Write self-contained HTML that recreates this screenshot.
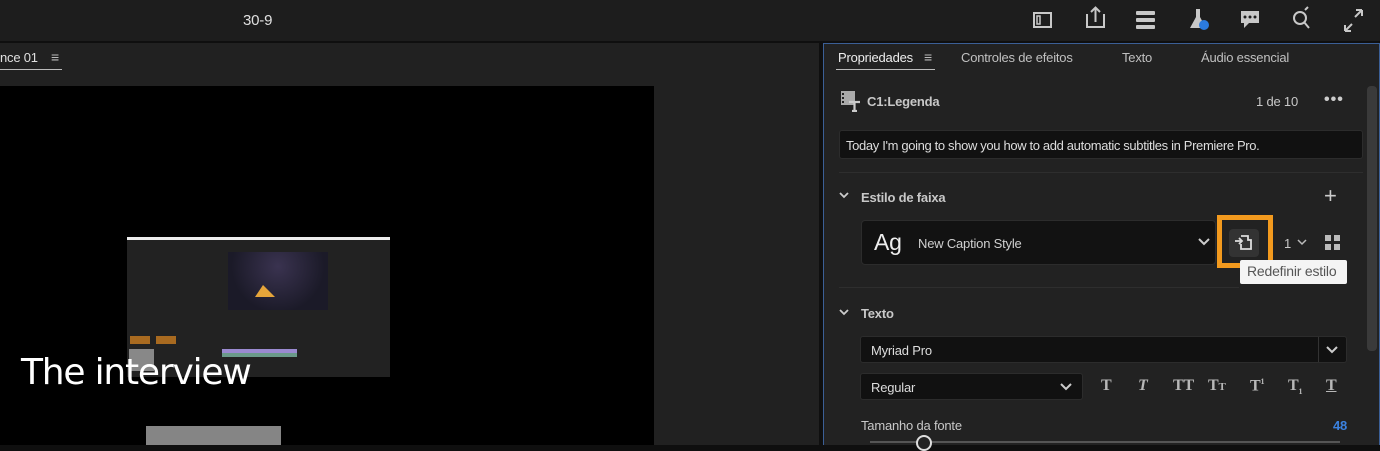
<!DOCTYPE html>
<html><head><meta charset="utf-8"><style>
*{margin:0;padding:0;box-sizing:border-box}
body{width:1380px;height:445px;overflow:hidden;background:#0f0f0f;font-family:"Liberation Sans",sans-serif;color:#cfcfcf;position:relative;font-size:13px}
.a{position:absolute}
.t{position:absolute;white-space:nowrap;letter-spacing:-0.2px}
.ser{font-family:"Liberation Serif",serif;color:#b8b8b8;font-weight:bold;font-size:16px}
</style></head><body>
<div class="a" style="left:0;top:0;width:1380px;height:41px;background:#1d1d1d"></div>
<div class="t" style="left:243px;top:12px;font-size:15px;color:#e0e0e0">30-9</div>
<svg class="a" style="left:1020px;top:0" width="360" height="41" viewBox="0 0 360 41" fill="none" stroke="#c8c8c8" stroke-width="2">
<rect x="14" y="13" width="17" height="14"/><rect x="17" y="16" width="3" height="8" stroke-width="1.5"/>
<path d="M67 14v13h17V14M75.5 22V8M71 12l4.5-4.5L80 12"/>
<g fill="#c8c8c8" stroke="none"><rect x="116" y="11" width="19" height="4" rx="1"/><rect x="116" y="18" width="19" height="4" rx="1"/><rect x="116" y="25" width="19" height="4" rx="1"/></g>
<path d="M174 9h8M176 9v8l-6 11h16l-6-11V9" fill="#c8c8c8" stroke="none"/>
<circle cx="184" cy="25" r="5" fill="#2b7bdf" stroke="none"/>
<path d="M221 11h18v12h-10l-5 5v-5h-3z" fill="#c8c8c8" stroke="none"/>
<g fill="#1d1d1d" stroke="none"><circle cx="225" cy="17" r="1.5"/><circle cx="230" cy="17" r="1.5"/><circle cx="235" cy="17" r="1.5"/></g>
<circle cx="280" cy="18" r="6"/><path d="M284 22l5 6M285 10l3-3"/>
<path d="M325 31l7-7M325 31v-6M325 31h6M342 10l-7 7M342 10v6M342 10h-6"/>
</svg>
<div class="a" style="left:0;top:43px;width:819px;height:402px;background:#212121"></div>
<div class="t" style="left:0;top:50px;font-size:13px;color:#e0e0e0">nce 01</div>
<div class="t" style="left:51px;top:49px;font-size:14px;color:#bbb">≡</div>
<div class="a" style="left:0;top:69px;width:62px;height:1px;background:#bbb"></div>
<div class="a" style="left:0;top:86px;width:654px;height:359px;background:#000"></div>
<div class="a" style="left:127px;top:237px;width:263px;height:140px;background:#222"></div>
<div class="a" style="left:127px;top:237px;width:263px;height:3px;background:#eee"></div>
<div class="a" style="left:228px;top:252px;width:100px;height:58px;background:radial-gradient(circle at 50% 25%,#3a3350,#1b1a28 70%)"></div>
<div class="a" style="left:255px;top:285px;width:20px;height:12px;background:#e6a53a;clip-path:polygon(40% 0,100% 100%,0 100%)"></div>
<div class="a" style="left:222px;top:349px;width:75px;height:4px;background:#9a8ad0"></div>
<div class="a" style="left:222px;top:353px;width:75px;height:4px;background:#6a9a8a"></div>
<div class="a" style="left:129px;top:349px;width:25px;height:22px;background:#888"></div>
<div class="a" style="left:130px;top:336px;width:20px;height:8px;background:#a86a20"></div>
<div class="a" style="left:156px;top:336px;width:20px;height:8px;background:#a86a20"></div>
<div class="t" style="left:21px;top:352px;font-size:36px;color:#fff;font-family:'DejaVu Sans',sans-serif;letter-spacing:-1.2px">The interview</div>
<div class="a" style="left:146px;top:426px;width:135px;height:19px;background:#858585"></div>
<div class="a" style="left:823px;top:43px;width:557px;height:402px;background:#222;border:1px solid #3b5f96;border-bottom:none"></div>
<div class="t" style="left:838px;top:50px;color:#eee">Propriedades</div>
<div class="t" style="left:924px;top:49px;font-size:14px;color:#bbb">≡</div>
<div class="a" style="left:836px;top:69px;width:99px;height:1px;background:#bbb"></div>
<div class="t" style="left:961px;top:50px;color:#c0c0c0">Controles de efeitos</div>
<div class="t" style="left:1122px;top:50px;color:#c0c0c0">Texto</div>
<div class="t" style="left:1201px;top:50px;color:#c0c0c0">Áudio essencial</div>
<div class="a" style="left:1367px;top:86px;width:10px;height:265px;background:#3a3a3a;border-radius:4px"></div>
<svg class="a" style="left:840px;top:90px" width="22" height="22" viewBox="0 0 22 22"><rect x="1" y="1" width="14" height="14" fill="#aaa"/><g fill="#222"><rect x="2" y="3" width="2" height="2"/><rect x="2" y="7" width="2" height="2"/><rect x="2" y="11" width="2" height="2"/></g><path d="M9 12h11M14.5 12v9M12 21h5" stroke="#ccc" stroke-width="2.2"/></svg>
<div class="t" style="left:867px;top:94px;font-weight:bold;color:#c8c8c8">C1:Legenda</div>
<div class="t" style="left:1256px;top:94px;color:#c8c8c8">1 de 10</div>
<div class="t" style="left:1324px;top:91px;font-size:16px;font-weight:bold;color:#ccc;letter-spacing:1px">•••</div>
<div class="a" style="left:839px;top:130px;width:524px;height:29px;background:#111;border:1px solid #2c2c2c;border-radius:3px"></div>
<div class="t" style="left:846px;top:138px;color:#ddd;letter-spacing:-0.35px">Today I'm going to show you how to add automatic subtitles in Premiere Pro.</div>
<div class="a" style="left:839px;top:172px;width:524px;height:1px;background:#2e2e2e"></div>
<svg class="a" style="left:838px;top:190px" width="12" height="10"><path d="M2 3l4 4 4-4" stroke="#ccc" stroke-width="1.8" fill="none"/></svg>
<div class="t" style="left:861px;top:190px;font-weight:bold;color:#c8c8c8">Estilo de faixa</div>
<div class="t" style="left:1324px;top:183px;font-size:22px;color:#ccc">+</div>
<div class="a" style="left:861px;top:220px;width:355px;height:45px;background:#121212;border:1px solid #2c2c2c;border-radius:4px"></div>
<div class="t" style="left:874px;top:229px;font-size:23px;color:#eee">Ag</div>
<div class="t" style="left:918px;top:236px;color:#cfcfcf">New Caption Style</div>
<svg class="a" style="left:1197px;top:237px" width="14" height="10"><path d="M2 2l5 5 5-5" stroke="#ccc" stroke-width="2" fill="none"/></svg>
<div class="a" style="left:1217px;top:215px;width:56px;height:53px;border:5px solid #f39a1e"></div>
<div class="a" style="left:1229px;top:229px;width:30px;height:28px;background:#333;border-radius:4px"></div>
<svg class="a" style="left:1233px;top:232px" width="22" height="20"><path d="M2 9h7M6 6l3 3-3 3M8 4h7v4h3v9H8v-5" stroke="#ddd" stroke-width="1.8" fill="none"/></svg>
<div class="t" style="left:1284px;top:236px;color:#c8c8c8">1</div>
<svg class="a" style="left:1297px;top:239px" width="12" height="8"><path d="M1 1l4 4 4-4" stroke="#bbb" stroke-width="1.5" fill="none"/></svg>
<svg class="a" style="left:1325px;top:235px" width="16" height="16"><g fill="#bbb"><rect x="0" y="0" width="6" height="6"/><rect x="9" y="0" width="6" height="6"/><rect x="0" y="9" width="6" height="6"/><rect x="9" y="9" width="6" height="6"/></g></svg>
<div class="a" style="left:1240px;top:260px;width:107px;height:24px;background:#f4f4f4;border-radius:2px"></div>
<div class="t" style="left:1247px;top:263px;font-size:14px;color:#555">Redefinir estilo</div>
<div class="a" style="left:839px;top:287px;width:400px;height:1px;background:#2e2e2e"></div>
<svg class="a" style="left:838px;top:307px" width="12" height="10"><path d="M2 3l4 4 4-4" stroke="#ccc" stroke-width="1.8" fill="none"/></svg>
<div class="t" style="left:861px;top:306px;font-weight:bold;color:#c8c8c8">Texto</div>
<div class="a" style="left:860px;top:336px;width:487px;height:27px;background:#111;border:1px solid #2c2c2c;border-radius:3px"></div>
<div class="a" style="left:1318px;top:337px;width:1px;height:25px;background:#333"></div>
<div class="t" style="left:871px;top:343px;color:#ddd">Myriad Pro</div>
<svg class="a" style="left:1325px;top:345px" width="14" height="10"><path d="M2 2l5 5 5-5" stroke="#ccc" stroke-width="2" fill="none"/></svg>
<div class="a" style="left:860px;top:373px;width:223px;height:27px;background:#111;border:1px solid #2c2c2c;border-radius:3px"></div>
<div class="t" style="left:871px;top:380px;color:#ddd">Regular</div>
<svg class="a" style="left:1059px;top:382px" width="14" height="10"><path d="M2 2l5 5 5-5" stroke="#ccc" stroke-width="2" fill="none"/></svg>
<div class="t ser" style="left:1101px;top:377px">T</div>
<div class="t ser" style="left:1138px;top:377px;font-style:italic">T</div>
<div class="t ser" style="left:1173px;top:377px">TT</div>
<div class="t ser" style="left:1208px;top:377px">T<span style="font-size:11px">T</span></div>
<div class="t ser" style="left:1250px;top:377px">T<sup style="font-size:8px">1</sup></div>
<div class="t ser" style="left:1288px;top:377px">T<sub style="font-size:8px">1</sub></div>
<div class="t ser" style="left:1326px;top:377px;text-decoration:underline">T</div>
<div class="t" style="left:861px;top:418px;color:#c8c8c8">Tamanho da fonte</div>
<div class="t" style="left:1333px;top:418px;font-weight:bold;color:#3b82e0">48</div>
<div class="a" style="left:870px;top:441px;width:470px;height:2px;background:#555"></div>
<div class="a" style="left:916px;top:435px;width:16px;height:16px;border:2px solid #ddd;border-radius:50%;background:#222"></div>
</body></html>
